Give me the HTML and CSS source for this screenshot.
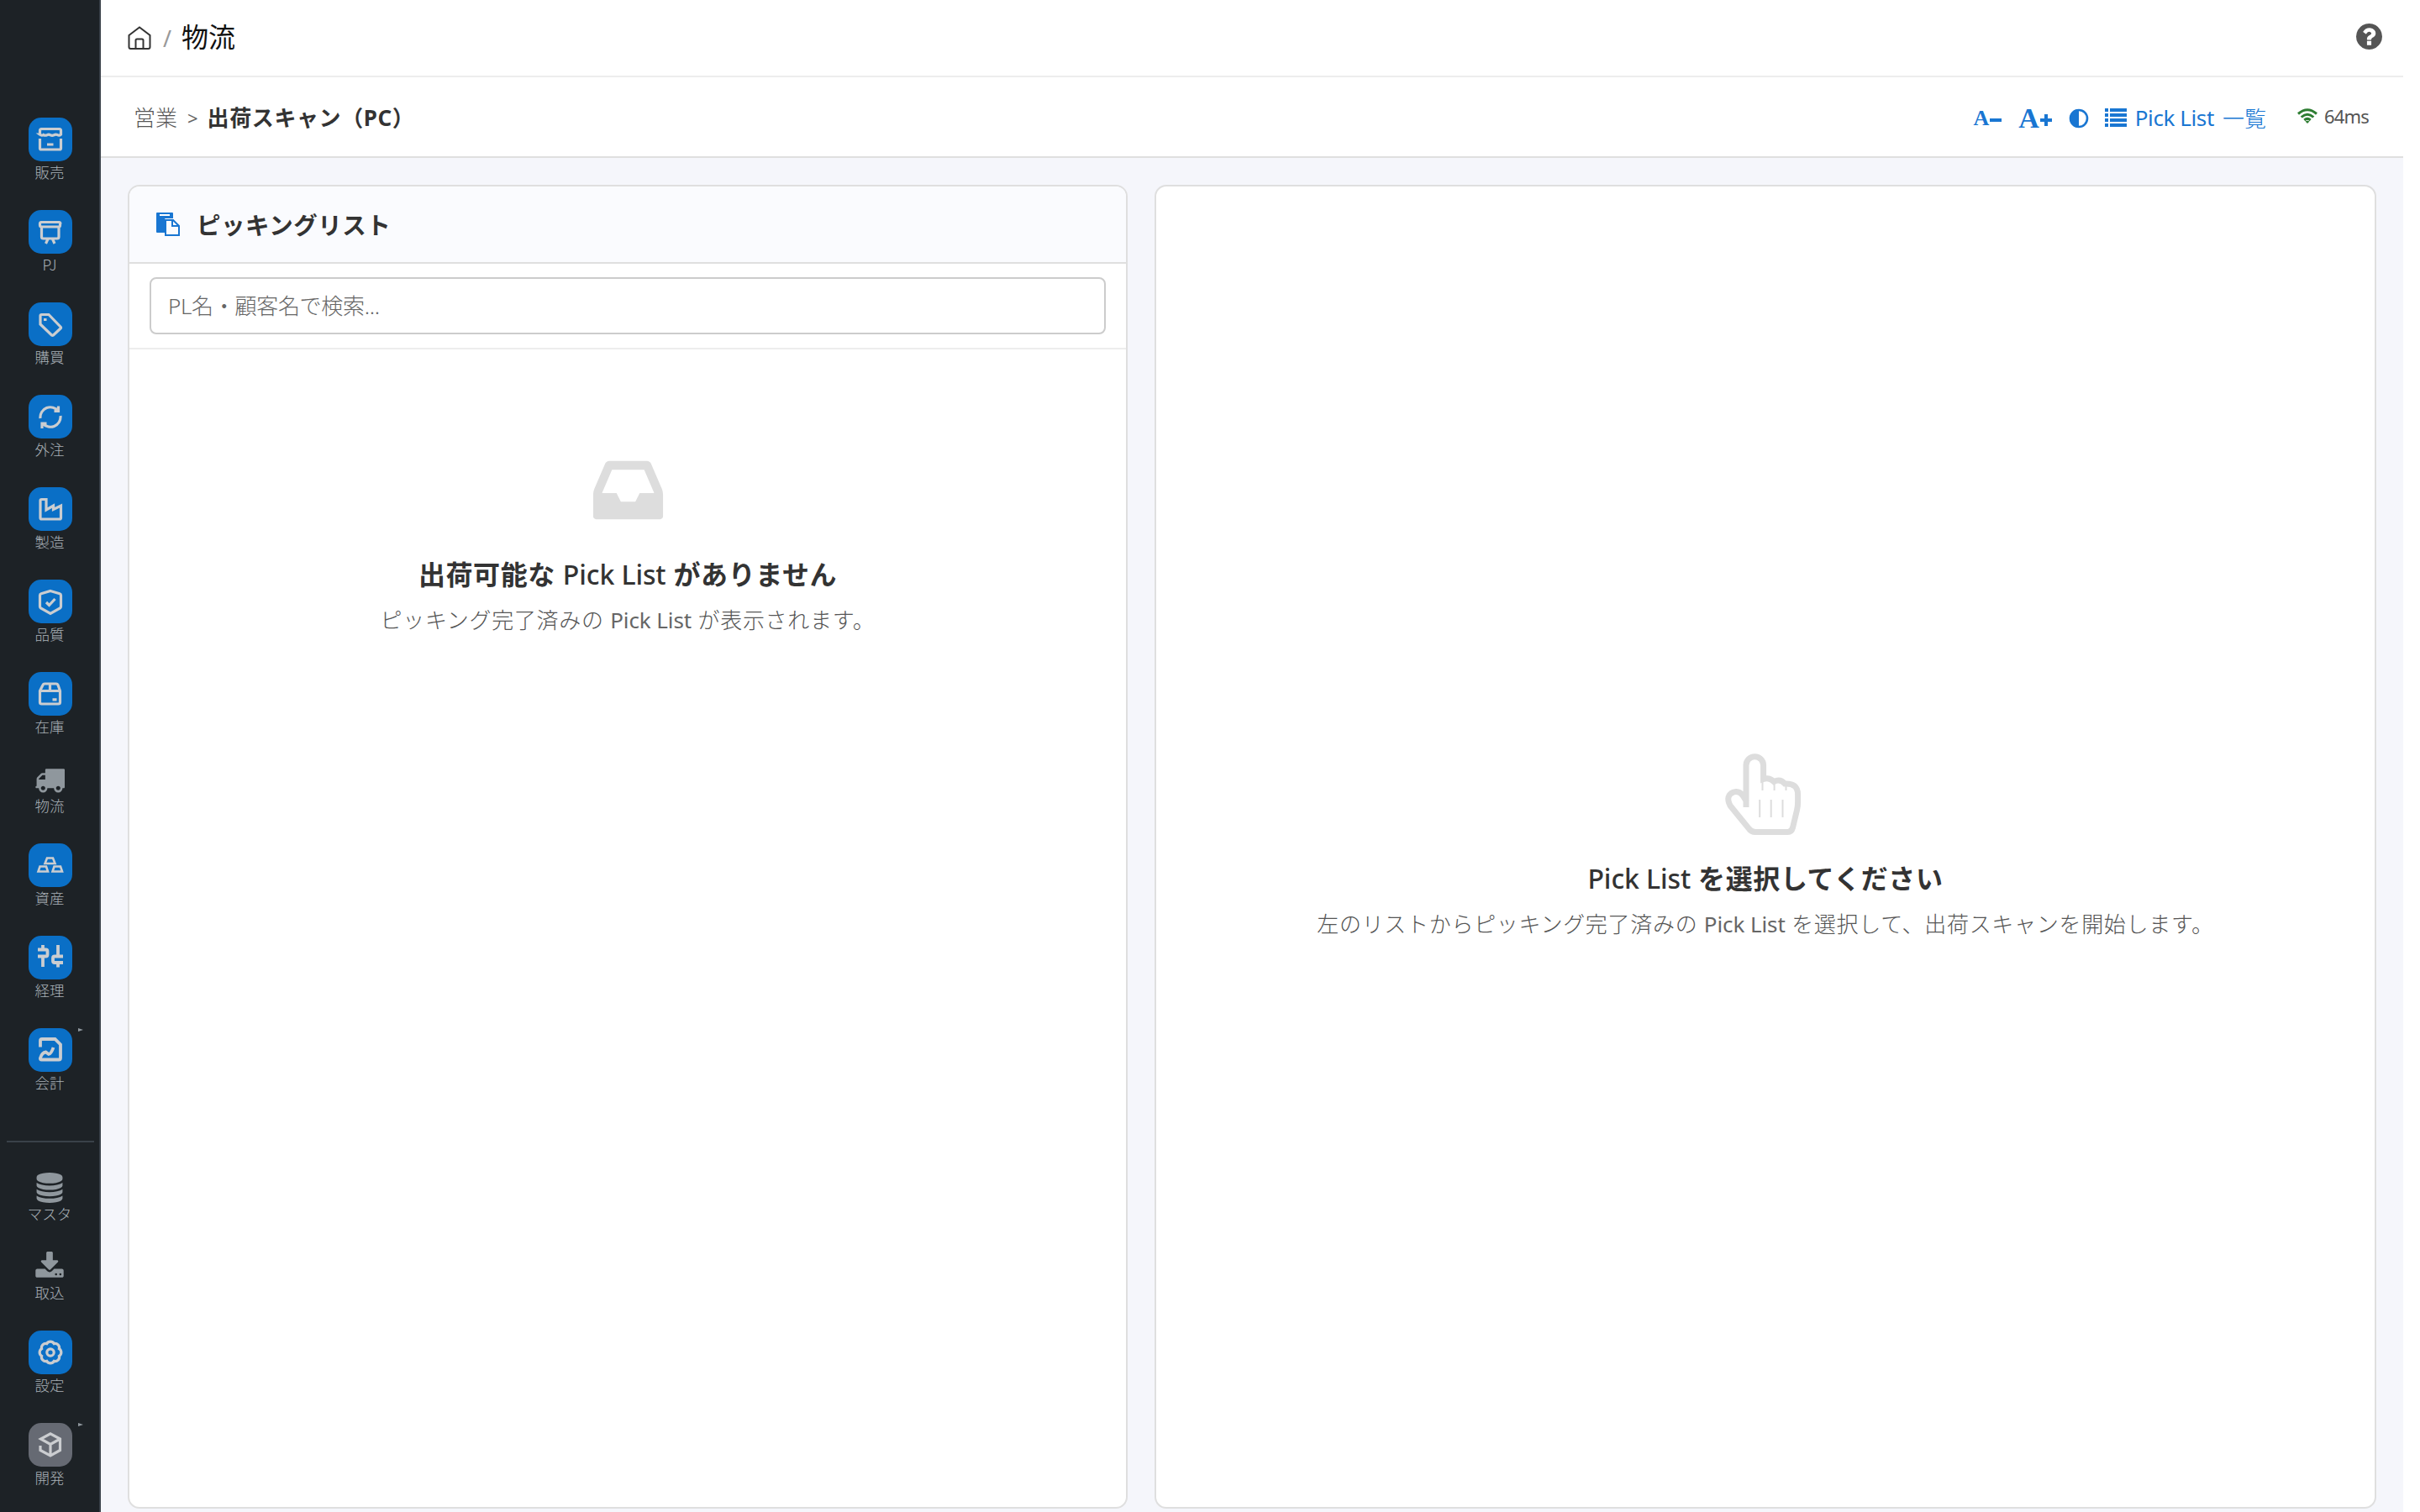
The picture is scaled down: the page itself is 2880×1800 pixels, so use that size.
FILE: index.html
```html
<!DOCTYPE html>
<html lang="ja">
<head>
    <meta charset="UTF-8">
    <meta name="viewport" content="width=device-width, initial-scale=1.0">
    <title>出荷スキャン（PC）</title>
    <link rel="stylesheet" href="styles.css">
</head>
<body>
    <!-- Sidebar -->
    <nav class="sidebar">
        <a class="nav-item"><span class="chip"><svg viewBox="0 0 52 52"><path d="M13.5 20V15.500a2 2 0 0 1 2-2h21a2 2 0 0 1 2 2V20q-2 2-4.200.5-2.100-1-4.200.3-2 1-4.100 0-2-1.200-4.200 0-2 1-4.200-.3-2 1.300-4.300-.5zM13.500 25V36.500a1.500 1.500 0 0 0 1.500 1.500h22a1.500 1.500 0 0 0 1.500-1.500V25M22 32h7.500"/></svg></span><span class="nav-label">販売</span></a>
        <a class="nav-item"><span class="chip"><svg viewBox="0 0 52 52"><path d="M15 14.500h21.500a1.500 1.500 0 0 1 1 2.500v1.500q0 1.500-1.500 1.500H15.500q-2 0-2-2v-1.500q0-2 1.500-2zM15.500 20v12a2 2 0 0 0 2 2H34a2 2 0 0 0 2-2V20M23 34.500L20.500 40M28.500 34.500L31 40"/></svg></span><span class="nav-label">PJ</span></a>
        <a class="nav-item"><span class="chip"><svg viewBox="0 0 52 52"><path d="M15.500 14.500H24l14 14.500q1 1 0 2L29.500 39q-1 .8-2 0L14 26V16a1.500 1.500 0 0 1 1.500-1.500zM18 20.500h3.500"/></svg></span><span class="nav-label">購買</span></a>
        <a class="nav-item"><span class="chip"><svg viewBox="0 0 52 52"><path d="M14 28a12 12 0 0 1 21.500-8.500M35.500 13.500v6h-5M38 25a12 12 0 0 1-21.500 8.500M16 40v-6h5.500"/></svg></span><span class="nav-label">外注</span></a>
        <a class="nav-item"><span class="chip"><svg viewBox="0 0 52 52"><path d="M15.500 14.500H21V27l8.500-5v4.500l9-4.500v14.500a1.500 1.500 0 0 1-1.500 1.500H15.500a1.500 1.500 0 0 1-1.500-1.500V16a1.500 1.500 0 0 1 1.500-1.500z"/></svg></span><span class="nav-label">製造</span></a>
        <a class="nav-item"><span class="chip"><svg viewBox="0 0 52 52"><path d="M26 13.500l11 3.200q1.500.5 1.500 2V32q0 1.200-1 2L26 40.500 14.500 34q-1-.8-1-2V18.700q0-1.500 1.500-2zM21 27l3.500 3.500 7-7.500"/></svg></span><span class="nav-label">品質</span></a>
        <a class="nav-item"><span class="chip"><svg viewBox="0 0 52 52"><path d="M13.500 22.500l3.500-7q.7-1.500 2-1.500h14q1.300 0 2 1.500l2.500 7V36q0 2-2 2h-20q-2 0-2-2zM13.500 22.500h24M25.500 14v8M28.500 32.800h5"/></svg></span><span class="nav-label">在庫</span></a>
        <a class="nav-item"><span class="glyph"><svg viewBox="0 0 1792 1792"><path d="M640 1408q0-52-38-90t-90-38-90 38-38 90 38 90 90 38 90-38 38-90zm-384-512h384v-256h-158q-13 0-22 9l-195 195q-9 9-9 22v30zm1280 512q0-52-38-90t-90-38-90 38-38 90 38 90 90 38 90-38 38-90zm256-1088v1024q0 15-4 26.500t-13.500 18.500-16.500 11.500-23.500 6-22.500 2-25.500 0-22.500-.5q0 106-75 181t-181 75-181-75-75-181h-384q0 106-75 181t-181 75-181-75-75-181h-64q-3 0-22.500.5t-25.500 0-22.500-2-23.500-6-16.500-11.500-13.500-18.500-4-26.500q0-26 19-45t45-19v-320q0-8-.5-35t0-38 2.500-34.500 6.500-37 14-30.500 22.500-30l198-198q19-19 50.500-32t58.500-13h160v-192q0-26 19-45t45-19h1024q26 0 45 19t19 45z"/></svg></span><span class="nav-label">物流</span></a>
        <a class="nav-item"><span class="chip"><svg viewBox="0 0 52 52"><path class="thin" d="M22 17.500h7l2.500 6.500h-12zM13.500 27.500h7.500l2 6h-11.500zM30.500 27.500h7.500l2 6H28.500z"/></svg></span><span class="nav-label">資産</span></a>
        <a class="nav-item"><span class="chip"><svg viewBox="0 0 52 52"><path class="bold" d="M17 11v5.500M11 16.500h9.500q2 0 2 2v4q0 2-2 2H11M17 24.500V37M35 11v13M41 24.500H31q-2 0-2 2V30q0 2 2 2h10M35 32v5.500"/></svg></span><span class="nav-label">経理</span></a>
        <a class="nav-item"><span class="chip"><svg viewBox="0 0 52 52"><path class="bold" d="M14 22.500V15q0-2 2-2h15.500l6.500 6.500V35.500q0 2-2 2H15.500q-2 0-1.500-2 2-6.500 6.500-7l3.500 2.500q3-.5 5.500-8"/></svg></span><span class="nav-label">会計</span><i class="arrow"></i></a>

        <div class="divider"></div>

        <a class="nav-item"><span class="glyph"><svg viewBox="0 0 1792 1792"><path d="M896 768q237 0 443-43t325-127v170q0 69-103 128t-280 93.500-385 34.500-385-34.500-280-93.500-103-128v-170q119 84 325 127t443 43zm0 768q237 0 443-43t325-127v170q0 69-103 128t-280 93.500-385 34.500-385-34.500-280-93.500-103-128v-170q119 84 325 127t443 43zm0-384q237 0 443-43t325-127v170q0 69-103 128t-280 93.500-385 34.500-385-34.500-280-93.500-103-128v-170q119 84 325 127t443 43zm0-1152q208 0 385 34.500t280 93.500 103 128v128q0 69-103 128t-280 93.500-385 34.500-385-34.500-280-93.500-103-128v-128q0-69 103-128t280-93.500 385-34.500z"/></svg></span><span class="nav-label">マスタ</span></a>
        <a class="nav-item"><span class="glyph"><svg viewBox="0 0 1792 1792"><path d="M1344 1344q0-26-19-45t-45-19-45 19-19 45 19 45 45 19 45-19 19-45zm256 0q0-26-19-45t-45-19-45 19-19 45 19 45 45 19 45-19 19-45zm128-224v320q0 40-28 68t-68 28h-1472q-40 0-68-28t-28-68v-320q0-40 28-68t68-28h465l135 136q58 56 136 56t136-56l136-136h464q40 0 68 28t28 68zm-325-569q17 41-14 70l-448 448q-18 19-45 19t-45-19l-448-448q-31-29-14-70 17-39 59-39h256v-448q0-26 19-45t45-19h256q26 0 45 19t19 45v448h256q42 0 59 39z"/></svg></span><span class="nav-label">取込</span></a>
        <a class="nav-item"><span class="chip"><svg viewBox="0 0 52 52"><path d="M36.400 30.300A5 5 0 0 1 30.300 36.400 5 5 0 0 1 21.700 36.400 5 5 0 0 1 15.600 30.300 5 5 0 0 1 15.600 21.700 5 5 0 0 1 21.700 15.600 5 5 0 0 1 30.300 15.600 5 5 0 0 1 36.400 21.700 5 5 0 0 1 36.400 30.300z"/><circle cx="26" cy="26" r="4.200"/></svg></span><span class="nav-label">設定</span></a>
        <a class="nav-item"><span class="chip chip-gray"><svg viewBox="0 0 52 52"><path d="M14 27v5.500l12 6.500 11.500-6.500V19L26 12.800 14.500 19 26 25.500 37.500 19M26 25.500V39"/></svg></span><span class="nav-label">開発</span><i class="arrow"></i></a>
    </nav>

    <main class="page">
        <header class="topbar">
            <svg class="home" viewBox="0 0 28 28"><path d="M1.500 11L14 1.500 26.500 11V25q0 2-2 2h-21q-2 0-2-2zM9.500 27V17q0-1.500 1.500-1.500h6q1.500 0 1.500 1.500v10"/></svg>
            <span class="slash">/</span>
            <span class="module">物流</span>
            <svg class="help" viewBox="128 128 1536 1536"><path d="M1024 1376v-192q0-14-9-23t-23-9h-192q-14 0-23 9t-9 23v192q0 14 9 23t23 9h192q14 0 23-9t9-23zm256-672q0-88-55.500-163t-138.500-116-170-41q-243 0-371 213-15 24 8 42l132 100q7 6 19 6 16 0 25-12 53-68 86-92 34-24 86-24 48 0 85.500 26t37.500 59q0 38-20 61t-68 45q-63 28-115.500 86.500t-52.500 125.500v36q0 14 9 23t23 9h192q14 0 23-9t9-23q0-19 21.500-49.500t54.500-49.500q32-18 49-28.500t46-35 44.500-48 28-60.500 12.500-81zm384 192q0 209-103 385.500t-279.500 279.500-385.500 103-385.500-103-279.500-279.500-103-385.500 103-385.500 279.500-279.500 385.500-103 385.500 103 279.500 279.500 103 385.500z"/></svg>
        </header>

        <div class="subbar">
            <span class="crumb">営業</span>
            <span class="gt">&gt;</span>
            <h1>出荷スキャン（PC）</h1>
            <div class="tools">
                <a class="font-btn small">A<svg viewBox="0 0 14 14"><path d="M0 5h14v4H0z"/></svg></a>
                <a class="font-btn">A<svg viewBox="0 0 14 14"><path d="M5 0h4v5h5v4H9v5H5V9H0V5h5z"/></svg></a>
                <svg class="contrast" viewBox="0 0 24 24"><circle cx="12" cy="12" r="10"/><path d="M12 1a11 11 0 0 0 0 22z"/></svg>
                <a class="list-link">
                    <svg viewBox="0 0 26 22"><path d="M0 0h4v4H0zM0 6h4v4H0zM0 12h4v4H0zM0 18h4v4H0zM6 0h20v4H6zM6 6h20v4H6zM6 12h20v4H6zM6 18h20v4H6z"/></svg>
                    <span class="latin">Pick List</span> 一覧
                </a>
                <span class="ping"><svg viewBox="0 0 24 18"><path d="M1 6.500q11-9.500 22 0M4.700 10.500q7.300-6.500 14.600 0M8.300 14q3.700-3.200 7.400 0"/><path class="dot" d="M9.500 15.500q2.500-1.500 5 0L12 18z"/></svg>64ms</span>
            </div>
        </div>

        <div class="panels">
            <section class="panel panel-list">
                <div class="panel-head">
                    <svg viewBox="0 0 28 28"><path d="M1 0h18q1 0 1 1v6h-9q-1 0-1 1v16H1q-1 0-1-1V1q0-1 1-1z"/><path class="clip" d="M4 2h12v2H4z"/><path class="sheet" d="M11 9h9l7 7v11H11zM19 9v7h8"/></svg>
                    <h2>ピッキングリスト</h2>
                </div>
                <div class="search">
                    <input type="text" placeholder="PL名・顧客名で検索...">
                </div>
                <div class="empty">
                    <svg class="inbox" viewBox="0 0 1792 1792"><path d="M1151 960h316q-1-3-2.500-8.500t-2.500-7.500l-212-496h-708l-212 496q-1 3-2.500 8.500t-2.500 7.500h316l95 192h320zm513 30v482q0 26-19 45t-45 19h-1408q-26 0-45-19t-19-45v-482q0-62 25-123l238-552q10-25 36.500-42t52.500-17h832q26 0 52.500 17t36.500 42l238 552q25 61 25 123z"/></svg>
                    <h3>出荷可能な <span class="latin">Pick List</span> がありません</h3>
                    <p>ピッキング完了済みの <span class="latin">Pick List</span> が表示されます。</p>
                </div>
            </section>

            <section class="panel panel-scan">
                <div class="empty">
                    <svg class="hand" viewBox="0 0 90 97"><path d="M25 64V14a10.300 10.300 0 0 1 20.600 0V30.500q7-2.500 12.500 3 7.500-4 13 2.500 15.500-1 15.500 13v9q0 5-1 9l-5 21q-1.500 5.500-6 5.500H36q-5 0-8-4.500L6 62Q0 50 10 46q7-2 11 4l5 8"/><path class="fine" d="M44.500 30v14M58.600 33v11M72.500 36v8M41.200 55v21M54.700 55v21M68.500 55v21"/></svg>
                    <h3><span class="latin">Pick List</span> を選択してください</h3>
                    <p>左のリストからピッキング完了済みの <span class="latin">Pick List</span> を選択して、出荷スキャンを開始します。</p>
                </div>
            </section>
        </div>
    </main>
</body>
</html>
```
FILE: styles.css
```css
* {
    box-sizing: border-box;
}
body {
    display: flex;
    height: 1800px;
    margin: 0;
    padding-right: 20px; /* scrollbar gutter */
    overflow: hidden;
    background: #fff;
    color: #333;
    font-family: "Noto Sans", "Noto Sans CJK JP", sans-serif;
    font-size: 26px;
}
h1, h2, h3, p {
    margin: 0;
}
svg {
    display: block;
    flex: none;
    overflow: visible;
}
.latin {
    font-weight: 400;
    letter-spacing: -0.1px;
}

/* Sidebar */
.sidebar {
    display: flex;
    flex-direction: column;
    flex: none;
    width: 120px;
    padding-top: 124px;
    background: #1d2226;
    border-right: 2px solid #3a4149;
}
.nav-item {
    position: relative;
    display: flex;
    flex-direction: column;
    align-items: center;
    padding: 16px 0;
    color: #a9b1b7;
}
.chip {
    width: 52px;
    height: 52px;
    margin-left: 2px;
    border-radius: 15px;
    background: #0a6fc6;
}
.chip-gray {
    background: #666a73;
}
.chip svg {
    width: 52px;
    height: 52px;
    fill: none;
    stroke: #cbcdd0;
    stroke-width: 3.2;
}
.chip .thin {
    stroke-width: 2.6;
}
.chip .bold {
    stroke-width: 3.8;
}
.glyph svg {
    width: 36px;
    height: 36px;
    fill: #8f979d;
}
.nav-label {
    height: 26px;
    font-size: 17.5px;
    line-height: 25px;
    font-family: "Noto Sans CJK JP", sans-serif;
    font-weight: 300;
}
.arrow {
    position: absolute;
    top: 16px;
    left: 93px;
    border-left: 6px solid #8f979d;
    border-top: 2.5px solid transparent;
    border-bottom: 2.5px solid transparent;
}
.divider {
    height: 2px;
    margin: 40px 6px 20px 8px;
    background: #3a4149;
}

/* Header rows */
.page {
    display: flex;
    flex-direction: column;
    flex: 1;
    background: #f5f6fb;
}
.topbar {
    display: flex;
    align-items: center;
    height: 92px;
    padding: 0 25px 4px 32px;
    background: #fff;
    border-bottom: 2px solid #ededed;
}
.home {
    width: 28px;
    height: 28px;
    margin-top: 3px;
    fill: none;
    stroke: #333;
    stroke-width: 2;
}
.slash {
    margin: 4px 12px 0 14px;
    color: #999;
    font-size: 27px;
}
.module {
    margin-top: -2px;
    color: #111;
    font-size: 32px;
}
.help {
    width: 31px;
    height: 31px;
    margin-left: auto;
    fill: #555;
}
.subbar {
    display: flex;
    align-items: center;
    height: 96px;
    padding: 0 41px 0 39px;
    background: #fff;
    border-bottom: 2px solid #dfdfdf;
}
.crumb {
    color: #555;
    font-weight: 300;
}
.gt {
    margin: 2px 11px 0 12px;
    color: #666;
    font-size: 22px;
}
.subbar h1 {
    font-size: 26px;
    font-weight: 700;
    letter-spacing: 0.6px;
}
.tools {
    display: flex;
    align-items: center;
    margin-left: auto;
    color: #1976d2;
}
.tools svg {
    fill: #1976d2;
}
.font-btn {
    display: flex;
    align-items: center;
    gap: 1px;
    margin: 3px 20px 0 0;
    font-family: "Liberation Serif", serif;
    font-size: 34px;
    font-weight: 700;
    line-height: 40px;
}
.font-btn svg {
    width: 14px;
    height: 14px;
    margin-top: 4px;
}
.font-btn.small {
    font-size: 26px;
}
.contrast {
    width: 24px;
    height: 24px;
    margin-top: 3px;
}
.tools .contrast circle {
    fill: none;
    stroke: #1976d2;
    stroke-width: 2.6;
}
.list-link {
    display: flex;
    align-items: center;
    gap: 10px;
    margin: 2px 0 0 19px;
    font-weight: 300;
}
.list-link .latin {
    letter-spacing: -0.4px;
}
.list-link svg {
    width: 26px;
    height: 22px;
}
.ping {
    display: flex;
    align-items: center;
    gap: 8px;
    margin: -3px 0 0 37px;
    color: #555;
    font-size: 22px;
    letter-spacing: -0.8px;
}
.ping svg {
    width: 24px;
    height: 18px;
    fill: none;
    stroke: #2e7d32;
    stroke-width: 3;
}
.tools .ping svg {
    fill: none;
}
.ping .dot {
    fill: #2e7d32;
    stroke: none;
}

/* Panels */
.panels {
    display: flex;
    flex: 1;
    gap: 32px;
    padding: 32px 32px 4px;
}
.panel {
    display: flex;
    flex-direction: column;
    background: #fff;
    border: 2px solid #dfdfdf;
    border-radius: 14px;
    overflow: hidden;
}
.panel-list {
    flex: none;
    width: 1190px;
}
.panel-scan {
    flex: 1;
    justify-content: center;
    padding-top: 8px;
}
.panel-head {
    display: flex;
    align-items: center;
    gap: 20px;
    height: 92px;
    padding: 0 32px;
    background: #fafbfe;
    border-bottom: 2px solid #dfdfdf;
}
.panel-head svg {
    width: 28px;
    height: 28px;
    fill: #1976d2;
}
.panel-head .clip {
    fill: #fff;
}
.panel-head .sheet {
    fill: #fafbfe;
    stroke: #1976d2;
    stroke-width: 2;
}
.panel-head h2 {
    margin-top: -2px;
    font-size: 28.5px;
    font-weight: 700;
    letter-spacing: 0.5px;
}
.search {
    height: 102px;
    padding: 16px 24px;
    border-bottom: 2px solid #ededed;
}
.search input {
    width: 100%;
    height: 68px;
    padding: 0 20px;
    border: 2px solid #ccc;
    border-radius: 8px;
    font-family: inherit;
    font-size: 26px;
    font-weight: 300;
    letter-spacing: -0.3px;
}
.search input::placeholder {
    color: #666;
}
.empty {
    display: flex;
    flex-direction: column;
    align-items: center;
}
.panel-list .empty {
    padding-top: 119px;
}
.empty h3 {
    height: 54px;
    font-size: 32px;
    line-height: 54px;
    letter-spacing: 0.6px;
}
.empty h3 .latin {
    font-weight: 500;
}
.empty p {
    height: 54px;
    color: #555;
    font-size: 26px;
    line-height: 54px;
    font-weight: 300;
    letter-spacing: 0.7px;
}
.empty p .latin {
    color: #666;
}
.inbox {
    width: 97px;
    height: 97px;
    margin-bottom: 25px;
    fill: #ddd;
}
.hand {
    width: 90px;
    height: 97px;
    margin: 0 0 25px -7px;
    fill: none;
    stroke: #ddd;
    stroke-width: 7;
}
.hand .fine {
    stroke-width: 2;
}
```
